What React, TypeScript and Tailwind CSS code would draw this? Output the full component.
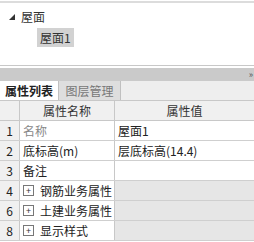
const rows: { no: string; name: string; value: string; group?: boolean; dim?: boolean }[] = [
  { no: "1", name: "名称", value: "屋面1", dim: true },
  { no: "2", name: "底标高(m)", value: "层底标高(14.4)" },
  { no: "3", name: "备注", value: "" },
  { no: "4", name: "钢筋业务属性", value: "", group: true },
  { no: "6", name: "土建业务属性", value: "", group: true },
  { no: "8", name: "显示样式", value: "", group: true },
];

function PlusBox() {
  return (
    <span className="inline-flex size-[11px] items-center justify-center border border-[#777] bg-white text-[9px] leading-none text-[#333]">
      +
    </span>
  );
}

export default function App() {
  return (
    <div
      className="flex h-[242px] w-[254px] flex-col overflow-hidden bg-white text-[12px] text-[#333]"
      style={{ fontFamily: '"Noto Sans CJK SC", "Noto Sans", sans-serif' }}
    >
      <div className="mt-px h-[2px] bg-[#dcdcdc]" />

      {/* tree */}
      <div className="flex h-[62px] flex-col pt-[6px]">
        <div className="flex items-center gap-[6px] pl-[9px] leading-[16px]">
          <svg width="6" height="6" viewBox="0 0 6 6">
            <polygon points="6,0 6,6 0,6" fill="#333" />
          </svg>
          <span>屋面</span>
        </div>
        <div className="mt-[3px] pl-[37px]">
          <span className="inline-block bg-[#d2d2d2] px-[3px] leading-[19px]">屋面1</span>
        </div>
      </div>

      <div className="h-[1px] bg-[#c8c8c8]" />
      <div className="h-[2px]" />

      {/* panel header */}
      <div className="flex h-[13px] items-center justify-end bg-[#cacaca] pr-[1px] text-[9px] leading-none text-[#555]">
        »
      </div>

      {/* tabs */}
      <div className="flex h-[19px] bg-[#eeeeee]">
        <div className="flex w-[59px] items-center justify-center border-r border-[#c0c0c0] bg-white font-bold text-[#222]">
          属性列表
        </div>
        <div className="flex w-[62px] items-center justify-center border-r border-[#c0c0c0] bg-[#dedede] text-[#777]">
          图层管理
        </div>
      </div>

      {/* table */}
      <div className="flex flex-col border-t border-[#c8c8c8]">
        <div className="flex h-[20px] border-b border-[#c8c8c8] bg-[#f0f0f0]">
          <div className="w-[20px] border-r border-[#c8c8c8]" />
          <div className="flex w-[95px] items-center justify-center border-r border-[#c8c8c8]">属性名称</div>
          <div className="flex flex-1 items-center justify-center">属性值</div>
        </div>
        {rows.map((r) => (
          <div key={r.no} className="flex h-[20px] border-b border-[#cfcfcf]">
            <div className="flex w-[20px] items-center justify-center border-r border-[#c8c8c8] bg-[#f0f0f0] text-[#222]">
              {r.no}
            </div>
            <div
              className={
                "flex w-[95px] items-center gap-[6px] border-r border-[#c8c8c8] pl-[3px] " +
                (r.dim ? "text-[#888]" : "text-[#222]")
              }
            >
              {r.group && <PlusBox />}
              <span>{r.name}</span>
            </div>
            <div className={"flex flex-1 items-center pl-[3px] text-[#222] " + (r.group ? "bg-[#e6e6e6]" : "")}>
              {r.value}
            </div>
          </div>
        ))}
      </div>
    </div>
  );
}
